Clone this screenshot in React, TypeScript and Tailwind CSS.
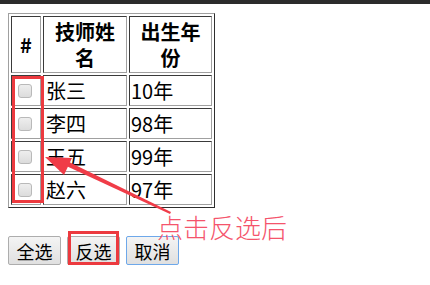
import React from "react";

type Row = { name: string; year: string };

const rows: Row[] = [
  { name: "张三", year: "10年" },
  { name: "李四", year: "98年" },
  { name: "王五", year: "99年" },
  { name: "赵六", year: "97年" },
];

const cell =
  "border border-t-[#3a3a3a] border-l-[#3a3a3a] border-r-[#a0a0a0] border-b-[#a0a0a0] p-0";

function Checkbox() {
  return (
    <div className="w-[14px] h-[14px] rounded-[3px] border border-[#b9b9b9] bg-gradient-to-b from-[#eeeeee] to-[#dcdcdc]" />
  );
}

function Button({ label, focused }: { label: string; focused?: boolean }) {
  return (
    <button
      className={
        "h-[29px] w-[53px] rounded-[2px] border text-[18px] leading-[24px] text-black bg-gradient-to-b from-[#f4f4f4] to-[#e0e0e0] " +
        (focused ? "border-[#6ea8ea]" : "border-[#adadad]")
      }
    >
      {label}
    </button>
  );
}

export default function App() {
  return (
    <div
      className="relative w-[430px] h-[285px] bg-white overflow-hidden"
      style={{ fontFamily: '"Noto Sans CJK SC", "Noto Sans", sans-serif' }}
    >
      <div className="h-[4px] bg-[#2b2b2b]" />
      <div className="pl-[8px] pt-[9px]">
        <table className="border-separate border-spacing-[2px] border border-t-[#a0a0a0] border-l-[#a0a0a0] border-r-[#2e2e2e] border-b-[#2e2e2e] text-[20px] text-black">
          <thead>
            <tr className="h-[57px]">
              <th className={cell + " w-[30px] font-bold text-center"}>#</th>
              <th className={cell + " w-[84px] font-bold text-center leading-[26px] px-[8px]"}>
                技师姓名
              </th>
              <th className={cell + " w-[83px] font-bold text-center leading-[26px] px-[8px]"}>
                出生年份
              </th>
            </tr>
          </thead>
          <tbody>
            {rows.map((r) => (
              <tr key={r.name} className="h-[31px]">
                <td className={cell}>
                  <div className="pl-[6px]">
                    <Checkbox />
                  </div>
                </td>
                <td className={cell + " leading-[27px] pl-[2px]"}>{r.name}</td>
                <td className={cell + " leading-[27px] pl-[1px]"}>{r.year}</td>
              </tr>
            ))}
          </tbody>
        </table>
        <div className="flex gap-[6px] mt-[28px]">
          <Button label="全选" />
          <Button label="反选" />
          <Button label="取消" focused />
        </div>
      </div>

      {/* annotations */}
      <div className="absolute left-[12px] top-[76px] w-[32px] h-[127px] border-[3px] border-[#ec3a3f]" />
      <div className="absolute left-[68px] top-[231px] w-[51px] h-[34px] border-[3px] border-[#ec3a3f]" />
      <svg className="absolute left-0 top-0" width="430" height="285">
        <polygon points="62,164 170,214 171,212 63,159" fill="#f03c48" />
        <polygon points="45,157 72,158 64,175" fill="#f03c48" />
      </svg>
      <div className="absolute left-[157px] top-[209px] text-[26px] leading-[36px] text-[#f5546c] font-light whitespace-nowrap">
        点击反选后
      </div>
    </div>
  );
}
